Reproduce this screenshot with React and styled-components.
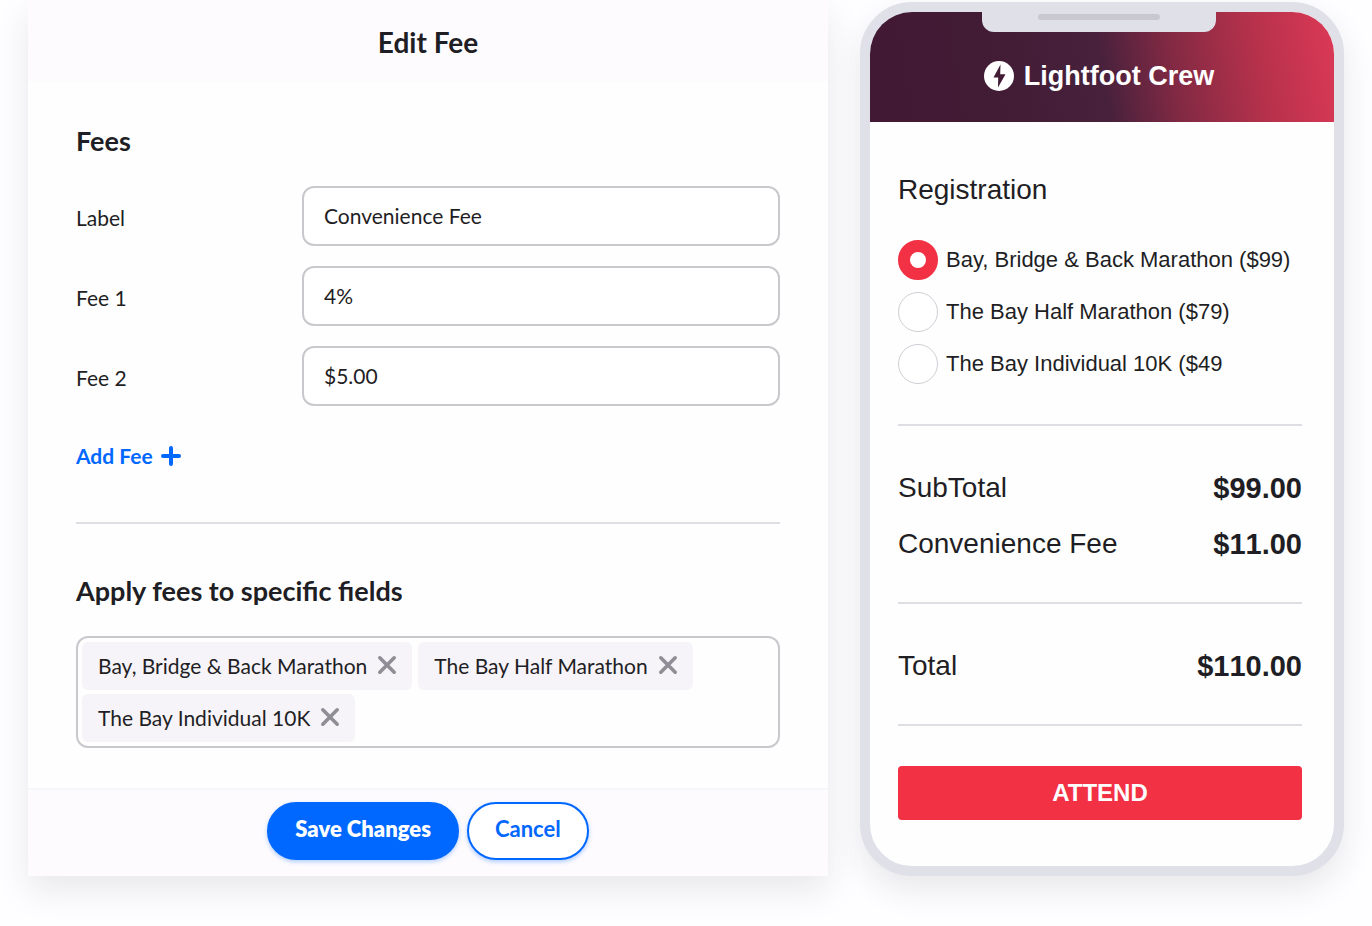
import React, { useState } from "react"
import styled, { createGlobalStyle } from "styled-components"

const GlobalStyle = createGlobalStyle`
  * {
    box-sizing: border-box;
  }
  body {
    margin: 0;
    background-color: #fefdff;
    color: #1f1e24;
    font-family: Lato, sans-serif;
  }
  h1, h2, dl, dd {
    margin: 0;
  }
  button, input {
    font: inherit;
    color: inherit;
  }
`;

const Page = styled.main`
  display: grid;
  grid-template-columns: minmax(0, 1fr) 484px;
  gap: 32px;
  align-items: start;
  padding: 0 28px 48px;
`;

const Panel = styled.form`
  background-color: #fefefe;
  box-shadow: 0 14px 32px rgba(40, 36, 50, 0.1);
`;

const PanelHeader = styled.header`
  padding: 22px 0 20px;
  background-color: #fdfbfe;
  text-align: center;
`;

const PanelTitle = styled.h1`
  font-size: 28px;
  line-height: 40px;
  font-weight: 700;
`;

const PanelBody = styled.div`
  padding: 42px 48px 40px;
`;

const SectionTitle = styled.h2`
  margin-bottom: 28px;
  font-size: 27px;
  line-height: 34px;
  font-weight: 700;
`;

const FieldList = styled.div`
  display: grid;
  gap: 20px;
`;

const Field = styled.div`
  display: grid;
  grid-template-columns: 226px 1fr;
  align-items: center;
`;

const FieldLabel = styled.label`
  padding-top: 4px;
  font-size: 21px;
  line-height: 28px;
`;

const TextInput = styled.input`
  width: 100%;
  height: 60px;
  padding: 0 20px 2px;
  border: 2px solid #c9c8cc;
  border-radius: 12px;
  background-color: #fff;
  font-size: 21px;
`;

const AddButton = styled.button`
  display: flex;
  align-items: center;
  gap: 8px;
  margin-top: 36px;
  padding: 0;
  border: 0;
  background: none;
  color: #0068ff;
  font-size: 21px;
  line-height: 28px;
  font-weight: 700;
`;

const Divider = styled.hr`
  height: 2px;
  margin: ${props => props.$space};
  border: 0;
  background-color: #dfdee4;
`;

const Tags = styled.div`
  display: flex;
  flex-wrap: wrap;
  gap: 4px 6px;
  padding: 4px;
  border: 2px solid #c9c8cc;
  border-radius: 12px;
`;

const Tag = styled.span`
  display: flex;
  align-items: center;
  gap: 10px;
  height: 48px;
  padding: 0 15px 2px 16px;
  border-radius: 6px;
  background-color: #f6f4f8;
  font-size: 21px;
`;

const RemoveButton = styled.button`
  display: flex;
  padding: 0;
  border: 0;
  background: none;
  color: #8f8e96;
`;

const PanelFooter = styled.footer`
  display: flex;
  justify-content: center;
  gap: 8px;
  padding: 12px 0 16px;
  border-top: 2px solid #f7f6f9;
  background-color: #fdfbfe;
`;

const PillButton = styled.button`
  height: 58px;
  padding: 0 26px 6px;
  border: 2px solid #0068ff;
  border-radius: 29px;
  background-color: ${props => props.$primary ? "#0068ff" : "#fff"};
  box-shadow: 0 2px 4px rgba(0, 104, 255, 0.3);
  color: ${props => props.$primary ? "#fff" : "#0068ff"};
  font-size: 22px;
  font-weight: ${props => props.$primary ? 800 : 700};
`;

const Phone = styled.section`
  margin-top: 2px;
  border: 10px solid #e0e0e9;
  border-radius: 52px;
  background-color: #fefefe;
  box-shadow: 0 14px 32px rgba(40, 36, 50, 0.1);
  overflow: hidden;
  font-family: "Liberation Sans", Arial, sans-serif;
`;

const PhoneHeader = styled.header`
  display: flex;
  flex-direction: column;
  align-items: center;
  height: 110px;
  padding-right: 6px;
  background: linear-gradient(80deg, #421934 0%, #421b35 28%, #48213c 50%, #802943 64%, #b5314b 82%, #dc3956 100%);
`;

const Notch = styled.div`
  display: flex;
  justify-content: center;
  width: 234px;
  height: 20px;
  padding-top: 2px;
  border-radius: 0 0 12px 12px;
  background-color: #e0e0e9;
`;

const Speaker = styled.div`
  width: 122px;
  height: 6px;
  border-radius: 3px;
  background-color: #c9c8d0;
`;

const Brand = styled.div`
  display: flex;
  align-items: center;
  gap: 10px;
  margin-top: 26px;
  color: #fff;
  font-size: 27px;
  line-height: 36px;
  font-weight: 700;
`;

const PhoneBody = styled.div`
  padding: 48px 32px 46px 28px;
`;

const PhoneTitle = styled.h2`
  margin-bottom: 30px;
  font-size: 28px;
  line-height: 40px;
  font-weight: 400;
`;

const Options = styled.div`
  display: grid;
  gap: 12px;
`;

const Option = styled.label`
  display: flex;
  align-items: center;
  gap: 8px;
  font-size: 22px;
  white-space: nowrap;
`;

const Radio = styled.input`
  appearance: none;
  flex: none;
  width: 40px;
  height: 40px;
  margin: 0;
  border: 1px solid #cfced5;
  border-radius: 50%;
  background-color: #fff;

  &:checked {
    border: 12px solid #f33145;
  }
`;

const Summary = styled.dl`
  display: grid;
  gap: 16px;
`;

const SummaryRow = styled.div`
  display: flex;
  justify-content: space-between;
  font-size: 28px;
  line-height: 40px;
`;

const Amount = styled.dd`
  font-size: 29px;
  font-weight: 700;
  font-kerning: none;
`;

const AttendButton = styled.button`
  display: block;
  width: 100%;
  height: 54px;
  border: 0;
  border-radius: 4px;
  background-color: #f33145;
  color: #fff;
  font-size: 24px;
  font-weight: 700;
`;

const PlusIcon = () => (
  <svg width="20" height="20" viewBox="0 0 20 20" stroke="currentColor" strokeWidth="4" strokeLinecap="round" aria-hidden="true">
    <path d="M10 2v16M2 10h16" />
  </svg>
)

const CloseIcon = () => (
  <svg width="20" height="20" viewBox="0 0 20 20" stroke="currentColor" strokeWidth="3.6" strokeLinecap="round" aria-hidden="true">
    <path d="M2.8 2.8l14.4 14.4M17.2 2.8L2.8 17.2" />
  </svg>
)

const BoltIcon = () => (
  <svg width="30" height="30" viewBox="0 0 30 30" aria-hidden="true">
    <circle cx="15" cy="15" r="15" fill="#fff" />
    <path d="M16.5 3.5L9.5 16.5H14.2L14 26.5L21.5 13.2H16.2Z" fill="#421b35" />
  </svg>
)

const races = [
  { name: "Bay, Bridge & Back Marathon", text: "Bay, Bridge & Back Marathon ($99)" },
  { name: "The Bay Half Marathon", text: "The Bay Half Marathon ($79)" },
  { name: "The Bay Individual 10K", text: "The Bay Individual 10K ($49" }
]

const App = () => {

    const [fields, setFields] = useState([
        { id: "label", title: "Label", value: "Convenience Fee" },
        { id: "fee1", title: "Fee 1", value: "4%" },
        { id: "fee2", title: "Fee 2", value: "$5.00" }
    ])

    const [tags, setTags] = useState(races.map(race => race.name))

    const [selected, setSelected] = useState(races[0].name)

    const changeHandler = event => {
        const { name, value } = event.target
        setFields(fields.map(field => field.id === name ? { ...field, value } : field))
    }

    const addFee = () => {
        const next = fields.length
        setFields([...fields, { id: `fee${next}`, title: `Fee ${next}`, value: "" }])
    }

    const removeTag = name => {
        setTags(tags.filter(tag => tag !== name))
    }

    return (
        <>
        <GlobalStyle />
        <Page>
            <Panel onSubmit={event => event.preventDefault()}>
                <PanelHeader>
                    <PanelTitle>Edit Fee</PanelTitle>
                </PanelHeader>
                <PanelBody>
                    <SectionTitle>Fees</SectionTitle>
                    <FieldList>
                        {fields.map(field => (
                            <Field key={field.id}>
                                <FieldLabel htmlFor={field.id}>{field.title}</FieldLabel>
                                <TextInput id={field.id} name={field.id} type="text" value={field.value} onChange={changeHandler} />
                            </Field>
                        ))}
                    </FieldList>
                    <AddButton type="button" onClick={addFee}>Add Fee <PlusIcon /></AddButton>
                    <Divider $space="52px 0 50px" />
                    <SectionTitle>Apply fees to specific fields</SectionTitle>
                    <Tags>
                        {tags.map(tag => (
                            <Tag key={tag}>
                                {tag}
                                <RemoveButton type="button" aria-label={`Remove ${tag}`} onClick={() => removeTag(tag)}>
                                    <CloseIcon />
                                </RemoveButton>
                            </Tag>
                        ))}
                    </Tags>
                </PanelBody>
                <PanelFooter>
                    <PillButton type="submit" $primary>Save Changes</PillButton>
                    <PillButton type="button">Cancel</PillButton>
                </PanelFooter>
            </Panel>

            <Phone>
                <PhoneHeader>
                    <Notch><Speaker /></Notch>
                    <Brand><BoltIcon />Lightfoot Crew</Brand>
                </PhoneHeader>
                <PhoneBody>
                    <PhoneTitle>Registration</PhoneTitle>
                    <Options>
                        {races.map(race => (
                            <Option key={race.name}>
                                <Radio type="radio" name="race" checked={selected === race.name} onChange={() => setSelected(race.name)} />
                                {race.text}
                            </Option>
                        ))}
                    </Options>
                    <Divider $space="40px 0 42px" />
                    <Summary>
                        <SummaryRow><dt>SubTotal</dt><Amount>$99.00</Amount></SummaryRow>
                        <SummaryRow><dt>Convenience Fee</dt><Amount>$11.00</Amount></SummaryRow>
                    </Summary>
                    <Divider $space="38px 0 42px" />
                    <Summary>
                        <SummaryRow><dt>Total</dt><Amount>$110.00</Amount></SummaryRow>
                    </Summary>
                    <Divider $space="38px 0 40px" />
                    <AttendButton type="button">ATTEND</AttendButton>
                </PhoneBody>
            </Phone>
        </Page>
        </>
    )
}

export default App;
